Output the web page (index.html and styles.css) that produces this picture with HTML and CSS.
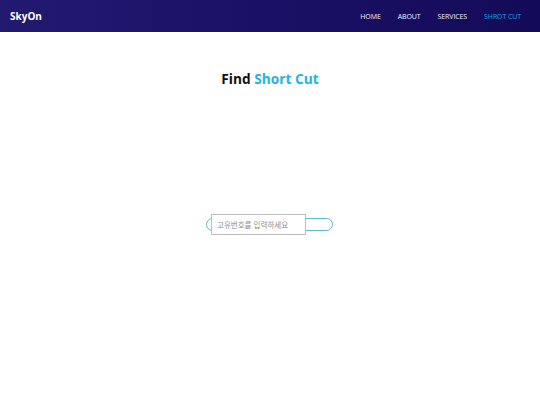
FILE: index.html
```html
<!DOCTYPE html>
<html lang="ko">
<head>
<meta charset="utf-8">
<title>SkyOn</title>
<link rel="stylesheet" href="styles.css">
</head>
<body>
<header class="navbar">
  <div class="brand">SkyOn</div>
  <nav class="menu">
    <a class="menu-link" href="#">HOME</a>
    <a class="menu-link" href="#">ABOUT</a>
    <a class="menu-link" href="#">SERVICES</a>
    <a class="menu-link active" href="#">SHROT CUT</a>
  </nav>
</header>
<main class="content">
  <h1 class="title">Find <span class="accent">Short Cut</span></h1>
  <div class="search">
    <div class="pill"></div>
    <input class="search-input" type="text" placeholder="고유번호를 입력하세요">
  </div>
</main>
</body>
</html>
```
FILE: styles.css
```css
html, body {
  margin: 0;
  padding: 0;
  background: #ffffff;
  font-family: "Open Sans", "Noto Sans CJK KR", sans-serif;
}
.navbar {
  height: 32px;
  display: flex;
  align-items: center;
  justify-content: space-between;
  padding: 0 19px 0 10px;
  background: linear-gradient(90deg, #221971 0%, #1a1166 50%, #130a58 100%);
}
.brand {
  color: #ffffff;
  font-weight: 700;
  font-size: 10px;
  margin-top: -1px;
}
.menu {
  display: flex;
  gap: 17px;
}
.menu-link {
  color: #f0eff8;
  text-decoration: none;
  font-size: 7px;
  letter-spacing: -0.1px;
}
.menu-link.active {
  color: #1fa3e6;
}
.content {
  display: flex;
  flex-direction: column;
  align-items: center;
}
.title {
  margin: 37px 0 0;
  font-size: 13.7px;
  font-weight: 700;
  color: #111111;
  line-height: 20px;
}
.accent {
  color: #1eb4df;
}
.search {
  position: relative;
  width: 127px;
  height: 21px;
  margin-top: 125px;
  margin-right: 1px;
  display: flex;
  align-items: center;
}
.pill {
  width: 125px;
  height: 11px;
  border: 1px solid #5fb6c8;
  border-radius: 7px;
}
.search-input {
  position: absolute;
  left: 5px;
  top: 0;
  width: 95px;
  height: 21px;
  box-sizing: border-box;
  border: 1px solid #bdbdbd;
  background: #ffffff;
  padding: 0 5px;
  font-family: "Noto Sans CJK KR", sans-serif;
  font-size: 7.5px;
  outline: none;
}
.search-input::placeholder {
  color: #8c8c8c;
}
```
